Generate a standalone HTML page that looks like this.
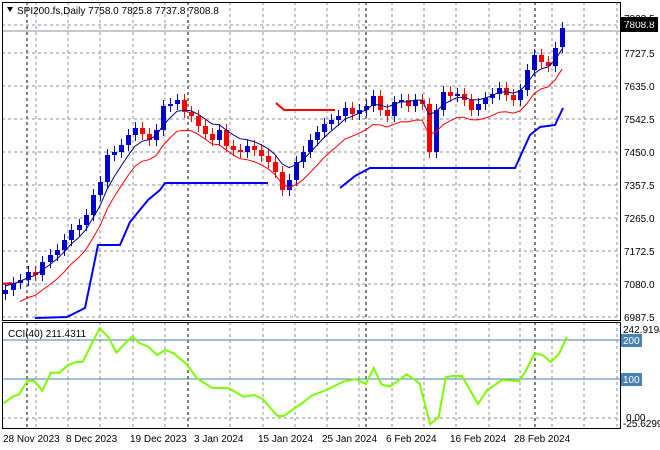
<!DOCTYPE html>
<html><head><meta charset="utf-8"><style>
body{margin:0;background:#fff;width:660px;height:450px;overflow:hidden;font-family:"Liberation Sans",sans-serif}
svg{position:absolute;left:0;top:0}
text{font-family:"Liberation Sans",sans-serif;font-size:10px;fill:#000}
</style></head><body>
<svg id="s" width="660" height="450" xmlns="http://www.w3.org/2000/svg"></svg>
<script>
const s=document.getElementById('s');let h='';
const L=620,T=2,B=320,CT=322,CB=428;
const gx=[36,68,100,133,165,230,263,295,327,359,392,424,456,489,520,552,584,617];
gx.forEach(x=>{h+=`<line x1="${x}" y1="${T}" x2="${x}" y2="${B}" stroke="#8a9098" stroke-dasharray="3,3"/><line x1="${x}" y1="${CT}" x2="${x}" y2="${CB}" stroke="#8a9098" stroke-dasharray="3,3"/>`});
[27,188,366,535].forEach(x=>{h+=`<line x1="${x}" y1="${T}" x2="${x}" y2="${B}" stroke="#000" stroke-dasharray="3,3"/><line x1="${x}" y1="${CT}" x2="${x}" y2="${CB}" stroke="#000" stroke-dasharray="3,3"/>`});
const lv=[[25,''],[53,'7727.5'],[86,'7635.0'],[119,'7542.5'],[152,'7450.0'],[185,'7357.5'],[218,'7265.0'],[251,'7172.5'],[284,'7080.0'],[317,'6987.5']];
lv.forEach(([y,t])=>{h+=`<line x1="2" y1="${y}" x2="${L}" y2="${y}" stroke="#8a9098" stroke-dasharray="3,3"/>`;if(t)h+=`<text x="624" y="${y+4}">${t}</text>`});
h+=`<line x1="2" y1="418" x2="${L}" y2="418" stroke="#8a9098" stroke-dasharray="3,3"/>`;
h+=`<line x1="2" y1="340" x2="${L}" y2="340" stroke="#4682b4"/><line x1="2" y1="379" x2="${L}" y2="379" stroke="#4682b4"/>`;
h+=`<line x1="2" y1="31" x2="${L}" y2="31" stroke="#8a9098"/>`;
const cl=[[5,290],[13,283],[20,280],[28,272],[35,275],[42,262],[50,255],[57,250],[64,240],[71,230],[79,225],[86,215],[93,195],[100,182],[107,155],[114,152],[121,145],[128,135],[135,128],[142,134],[149,140],[156,130],[163,106],[170,104],[177,100],[184,112],[191,116],[198,126],[205,134],[212,140],[219,130],[226,146],[233,150],[240,152],[247,146],[254,150],[261,156],[268,162],[275,172],[282,190],[289,180],[296,162],[303,152],[310,140],[317,132],[324,124],[331,120],[338,116],[345,108],[352,114],[359,110],[366,106],[373,96],[380,110],[387,116],[394,102],[401,100],[408,106],[415,100],[422,104],[429,152],[436,110],[443,92],[450,96],[457,94],[464,100],[471,110],[478,104],[485,98],[492,94],[499,88],[506,95],[513,100],[520,90],[527,70],[534,55],[541,62],[548,66],[555,48],[562,28]];
let prev=294;
cl.forEach(([x,c],i)=>{const o=i==cl.length-1?47:prev;const up=c<o;const col=up?'#0000cd':'#ff0000';const top=Math.min(o,c),bot=Math.max(o,c);
h+=`<line x1="${x+.5}" y1="${top-6}" x2="${x+.5}" y2="${bot+6}" stroke="${col}"/><rect x="${x-2}" y="${top}" width="5" height="${Math.max(2,bot-top)}" fill="${col}"/>`;prev=c});
let a=[],b=[];let m=290;cl.forEach(([x,c])=>{m=m*0.7+c*0.3;a.push(`${x},${(m-4).toFixed(1)}`);b.push(`${x},${(m+16).toFixed(1)}`)});
h+=`<polyline points="${a.join(' ')}" fill="none" stroke="#00008b"/>`;
h+=`<polyline points="${b.slice(2).join(' ')}" fill="none" stroke="#ff0000"/>`;
h+=`<polyline points="35,318 67,317 85,308 98,245 120,245 130,222 148,200 160,190 165,183 268,183" fill="none" stroke="#0000ff" stroke-width="2"/>`;
h+=`<polyline points="340,188 355,176 370,168 515,168 530,135 540,127 555,125 563,108" fill="none" stroke="#0000ff" stroke-width="2"/>`;
h+=`<polyline points="276,103 284,110 335,110" fill="none" stroke="#ff0000" stroke-width="2"/>`;
h+=`<polyline points="2,284 12,283" fill="none" stroke="#ff0000" stroke-width="2"/>`;
const cz=[[8,310],[30,290],[45,283],[65,242],[80,242],[100,272],[120,218],[140,218],[160,196],[180,186],[195,186],[235,85],[255,110],[275,158],[295,130],[312,110],[330,130],[350,140],[370,165],[390,150],[410,160],[440,192],[465,235],[500,263],[540,265],[575,290],[600,285],[620,297],[655,348],[670,348],[700,320],[710,313],[735,287],[770,270],[810,245],[840,237],[863,252],[882,204],[900,253],[920,260],[960,223],[990,250],[1015,372],[1035,352],[1052,232],[1070,228],[1090,228],[1128,312],[1150,270],[1185,240],[1225,243],[1240,215],[1262,160],[1280,165],[1300,186],[1320,160],[1338,110]];
h+=`<polyline points="${cz.map(([x,y])=>(x/2.36).toFixed(1)+','+(300+y/3).toFixed(1)).join(' ')}" fill="none" stroke="#7cfc00" stroke-width="2"/>`;
h+=`<rect x="2.5" y="2.5" width="${L-2}" height="${B-2}" fill="none" stroke="#000"/><rect x="2.5" y="${CT+.5}" width="${L-2}" height="${CB-CT}" fill="none" stroke="#000"/>`;
h+=`<rect x="621" y="17" width="37" height="15" fill="#000"/><text x="624" y="28" style="fill:#fff">7808.8</text>`;
h+=`<text x="624" y="22">7823.5</text>`;
h+=`<path d="M7,7 L13,7 L10,12Z" fill="#000"/><text x="17" y="14">SPI200.fs,Daily  7758.0 7825.8 7737.8 7808.8</text>`;
h+=`<text x="8" y="337">CCI(40) 211.4311</text>`;
h+=`<text x="623" y="333">242.9194</text>`;
h+=`<rect x="621" y="334" width="21" height="13" fill="#4682b4"/><text x="623" y="344" style="fill:#fff">200</text>`;
h+=`<rect x="621" y="373" width="21" height="13" fill="#4682b4"/><text x="623" y="383" style="fill:#fff">100</text>`;
h+=`<text x="626" y="421">0.00</text><text x="623" y="427">-25.6299</text>`;
const d=[[3,'28 Nov 2023'],[66,'8 Dec 2023'],[130,'19 Dec 2023'],[194,'3 Jan 2024'],[258,'15 Jan 2024'],[322,'25 Jan 2024'],[386,'6 Feb 2024'],[450,'16 Feb 2024'],[514,'28 Feb 2024']];
d.forEach(([x,t])=>{h+=`<text x="${x}" y="442">${t}</text>`});
s.innerHTML=h;
</script>
</body></html>
